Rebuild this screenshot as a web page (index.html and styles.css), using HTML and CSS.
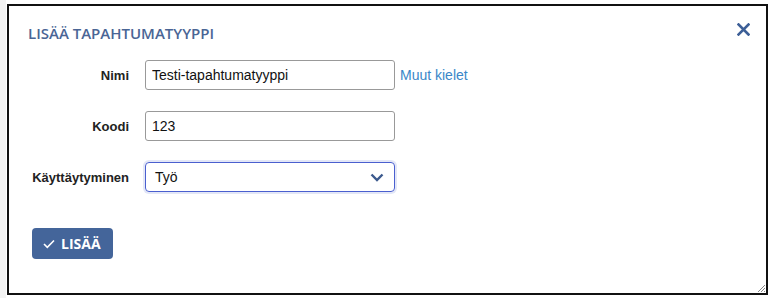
FILE: index.html
```html
<!DOCTYPE html>
<html lang="fi">
<head>
    <meta charset="UTF-8">
    <meta name="viewport" content="width=device-width, initial-scale=1.0">
    <title>Lisää tapahtumatyyppi</title>
    <link rel="stylesheet" href="styles.css">
</head>
<body>

    <div class="page">
        <div class="dialog">
            <h2 class="dialog-title">Lisää tapahtumatyyppi</h2>

            <button class="close-btn" title="Sulje">
                <svg width="13" height="13" viewBox="0 0 13 13">
                    <path d="M1.5 1.5 L11.5 11.5 M11.5 1.5 L1.5 11.5" stroke="#3d5f97" stroke-width="2.6" stroke-linecap="square" fill="none"/>
                </svg>
            </button>

            <div class="form">
                <label class="form-label" for="nimi">Nimi</label>
                <input class="form-input" id="nimi" type="text" value="Testi-tapahtumatyyppi">
                <a class="other-langs" href="#">Muut kielet</a>

                <label class="form-label" for="koodi">Koodi</label>
                <input class="form-input" id="koodi" type="text" value="123">
                <span></span>

                <label class="form-label" for="kaytos">Käyttäytyminen</label>
                <div class="select-box" id="kaytos">
                    <span>Työ</span>
                    <svg width="14" height="9" viewBox="0 0 14 9">
                        <path d="M1.5 1.5 L7 7 L12.5 1.5" stroke="#3c5a8e" stroke-width="2.4" fill="none"/>
                    </svg>
                </div>
                <span></span>
            </div>

            <button class="add-btn">
                <svg width="12" height="10" viewBox="0 0 12 10">
                    <path d="M1 5 L4.3 8.3 L11 1.5" stroke="#fff" stroke-width="1.6" fill="none"/>
                </svg>
                LISÄÄ
            </button>

            <svg class="grip" width="9" height="9" viewBox="0 0 9 9">
                <path d="M8 1 L1 8 M8 4 L4 8 M8 7 L7 8" stroke="#888" stroke-width="1" fill="none"/>
            </svg>
        </div>
    </div>

</body>
</html>
```

FILE: styles.css
```css
body {
    margin: 0;
    background: #fff;
    font-family: "Liberation Sans", Arial, sans-serif;
}
.page {
    padding: 4px 0 0 7px;
    background: linear-gradient(to right, #f3f3f3 0, #f3f3f3 6px, #fff 6px);
    height: 298px;
    box-sizing: border-box;
}
.dialog {
    position: relative;
    width: 761px;
    height: 291px;
    box-sizing: border-box;
    border: 2px solid #111;
    background: #fff;
    padding: 17px 18px 0 19px;
}
.dialog-title {
    margin: 0;
    font-family: "Open Sans", sans-serif;
    font-size: 15px;
    font-weight: 600;
    line-height: 20px;
    color: #4a6595;
    text-transform: uppercase;
}
.close-btn {
    position: absolute;
    top: 17px;
    right: 16px;
    border: none;
    background: none;
    padding: 0;
    cursor: pointer;
}
.form {
    display: grid;
    grid-template-columns: 101px 250px auto;
    column-gap: 16px;
    row-gap: 21px;
    align-items: center;
    margin-top: 17px;
}
.form-label {
    text-align: right;
    font-weight: bold;
    font-size: 13px;
    color: #222;
}
.form-input {
    height: 30px;
    box-sizing: border-box;
    border: 1px solid #999;
    border-radius: 3px;
    padding: 0 6px;
    font-family: "Liberation Sans", Arial, sans-serif;
    font-size: 14px;
    color: #111;
}
.other-langs {
    margin-left: -11px;
    color: #3a87c8;
    font-size: 14px;
    text-decoration: none;
}
.select-box {
    height: 30px;
    box-sizing: border-box;
    border: 1px solid #4a5fcf;
    border-radius: 4px;
    box-shadow: 0 0 0 2px #e3e7f7;
    display: flex;
    align-items: center;
    justify-content: space-between;
    padding: 0 10px 0 9px;
    font-size: 14px;
    color: #111;
}
.add-btn {
    display: flex;
    align-items: center;
    gap: 6px;
    margin: 36px 0 0 4px;
    width: 81px;
    height: 31px;
    border: none;
    border-radius: 4px;
    background: #44659a;
    color: #fff;
    font-family: "Open Sans", sans-serif;
    font-weight: bold;
    font-size: 14px;
    padding: 0 0 0 11px;
    cursor: pointer;
}
.grip {
    position: absolute;
    right: 0;
    bottom: 0;
}
```
